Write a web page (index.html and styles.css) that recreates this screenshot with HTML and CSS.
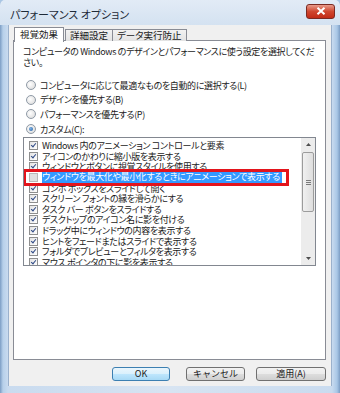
FILE: index.html
```html
<!DOCTYPE html>
<html lang="ja">
<head>
    <meta charset="UTF-8">
    <title>パフォーマンス オプション</title>
    <link rel="stylesheet" href="styles.css">
</head>
<body>
    <div class="window">
        <div class="titlebar">
            <span class="title">パフォーマンス オプション</span>
            <span class="close">
                <svg width="10" height="8" viewBox="0 0 10 8"><path d="M1.5 0.8 L8.5 7.2 M8.5 0.8 L1.5 7.2" stroke="#fff" stroke-width="2"/></svg>
            </span>
        </div>
        <div class="client">
            <div class="tabs">
                <div class="tab active">視覚効果</div>
                <div class="tab">詳細設定</div>
                <div class="tab">データ実行防止</div>
            </div>
            <div class="panel">
                <p class="intro">コンピュータの Windows のデザインとパフォーマンスに使う設定を選択してください。</p>
                <div class="radios">
                    <label class="radio"><span class="dot"></span>コンピュータに応じて最適なものを自動的に選択する(L)</label>
                    <label class="radio"><span class="dot"></span>デザインを優先する(B)</label>
                    <label class="radio"><span class="dot"></span>パフォーマンスを優先する(P)</label>
                    <label class="radio on"><span class="dot"></span>カスタム(C):</label>
                </div>
                <div class="listbox">
                    <div class="items">
                        <div class="item"><span class="check"></span>Windows 内のアニメーション コントロールと要素</div>
                        <div class="item"><span class="check"></span>アイコンのかわりに縮小版を表示する</div>
                        <div class="item"><span class="check"></span>ウィンドウとボタンに視覚スタイルを使用する</div>
                        <div class="item focus"><span class="check off"></span><span class="sel">ウィンドウを最大化や最小化するときにアニメーションで表示する</span></div>
                        <div class="item"><span class="check"></span>コンボ ボックスをスライドして開く</div>
                        <div class="item"><span class="check"></span>スクリーン フォントの縁を滑らかにする</div>
                        <div class="item"><span class="check"></span>タスク バー ボタンをスライドする</div>
                        <div class="item"><span class="check"></span>デスクトップのアイコン名に影を付ける</div>
                        <div class="item"><span class="check"></span>ドラッグ中にウィンドウの内容を表示する</div>
                        <div class="item"><span class="check"></span>ヒントをフェードまたはスライドで表示する</div>
                        <div class="item"><span class="check"></span>フォルダでプレビューとフィルタを表示する</div>
                        <div class="item"><span class="check"></span>マウス ポインタの下に影を表示する</div>
                    </div>
                    <div class="scrollbar">
                        <div class="arrow">
                            <svg width="5" height="3" viewBox="0 0 5 3"><path d="M0 3 L2.5 0 L5 3 Z" fill="#4d4d4d"/></svg>
                        </div>
                        <div class="track">
                            <div class="thumb"><span class="grip"></span></div>
                        </div>
                        <div class="arrow">
                            <svg width="5" height="3" viewBox="0 0 5 3"><path d="M0 0 L2.5 3 L5 0 Z" fill="#4d4d4d"/></svg>
                        </div>
                    </div>
                </div>
            </div>
            <div class="buttons">
                <button class="btn ok">OK</button>
                <button class="btn cancel">キャンセル</button>
                <button class="btn apply">適用(A)</button>
            </div>
        </div>
    </div>
</body>
</html>
```

FILE: styles.css
```css
body {
    margin: 0;
    font-family: "Noto Sans CJK JP", "Noto Sans", sans-serif;
    font-feature-settings: "palt";
    color: #1a1a1a;
    background-color: #a9c6e4;
}
.window {
    width: 340px;
    height: 393px;
    box-sizing: border-box;
    padding: 0 8px 7px 8px;
    background: linear-gradient(to right, #7c9dc4 0, #b7d0ea 3px, #c9dbef 8px, #d7e4f2 50%, #c9dbef 332px, #a9c7e6 337px, #7c9dc4 340px);
    border-radius: 5px 5px 0 0;
}
.titlebar {
    height: 25px;
    display: flex;
    align-items: center;
    justify-content: space-between;
    background: linear-gradient(to bottom, #e2ebf6, #d4e2f1);
    margin: 0 -8px;
    padding: 0 5px 0 10px;
    border-radius: 5px 5px 0 0;
}
.title {
    font-size: 11px;
    color: #1e2a38;
    margin-top: 2px;
}
.close {
    width: 27px;
    height: 13px;
    margin-top: -3px;
    display: flex;
    align-items: center;
    justify-content: center;
    background: linear-gradient(to bottom, #e89c8c, #d0472f 50%, #c22b16);
    border: 1px solid #7b2a22;
    border-radius: 3px;
}
.client {
    height: 361px;
    box-sizing: border-box;
    background-color: #f0f0f0;
    padding: 2px 5px 0 4px;
    border-left: 1px solid #9bb1cc;
    border-right: 1px solid #9bb1cc;
}
.tabs {
    display: flex;
    height: 13px;
    padding-left: 1px;
    position: relative;
    z-index: 1;
}
.tab {
    font-size: 9.5px;
    line-height: 11px;
    padding: 0 4px;
    margin-top: 2px;
    height: 11px;
    border: 1px solid #898c95;
    border-bottom: none;
    background: linear-gradient(to bottom, #f2f2f2, #e3e3e3);
    margin-right: -1px;
}
.tab.active {
    margin-top: 0;
    height: 14px;
    line-height: 13px;
    padding: 0 5px;
    background-color: #fff;
    background-image: none;
    margin-right: 1px;
}
.panel {
    height: 320px;
    box-sizing: border-box;
    background-color: #fff;
    border: 1px solid #898c95;
    padding: 5px 9px 0 9px;
    font-size: 9px;
    letter-spacing: -0.35px;
}
.intro {
    margin: 0 -3px 0 0;
    line-height: 11px;
}
.radios {
    margin-top: 10px;
    display: flex;
    flex-direction: column;
}
.radio {
    display: flex;
    align-items: center;
    height: 14.6px;
}
.dot {
    width: 8px;
    height: 8px;
    border: 1px solid #8f9aa6;
    border-radius: 50%;
    background: radial-gradient(circle at 40% 40%, #ffffff, #d6d6d6);
    margin: 0 4px 0 3px;
    position: relative;
}
.radio.on .dot::after {
    content: "";
    position: absolute;
    left: 2px;
    top: 2px;
    width: 4px;
    height: 4px;
    border-radius: 50%;
    background: radial-gradient(circle at 40% 40%, #7fb3e8, #1d5a9c);
}
.listbox {
    margin-top: 1px;
    height: 129px;
    box-sizing: border-box;
    border: 1px solid #828790;
    display: flex;
}
.items {
    flex: 1;
    padding-top: 2px;
    overflow: hidden;
}
.item {
    display: flex;
    align-items: center;
    height: 10.6px;
    white-space: nowrap;
    padding-left: 5px;
}
.check {
    width: 7px;
    height: 7px;
    flex: none;
    border: 1px solid #8e8f8f;
    background: linear-gradient(135deg, #e3e3e3, #ffffff);
    margin-right: 4px;
    position: relative;
}
.check::after {
    content: "";
    position: absolute;
    left: 2px;
    top: 0;
    width: 2px;
    height: 4px;
    border: solid #2f4a86;
    border-width: 0 1.5px 1.5px 0;
    transform: rotate(40deg);
}
.check.off {
    background: #e0e0e0;
    border-color: #b8b8b8;
}
.check.off::after {
    display: none;
}
.item.focus {
    position: relative;
    z-index: 1;
    width: fit-content;
    margin: -3px 0 -3px -1px;
    border: 3px solid #e3141c;
    padding: 0 4px 0 3px;
    background-color: #fff;
}
.sel {
    background-color: #3399ff;
    color: #fff;
    line-height: 10.6px;
    padding-right: 2px;
}
.scrollbar {
    width: 14px;
    display: flex;
    flex-direction: column;
    background-color: #ececec;
}
.arrow {
    height: 13px;
    display: flex;
    align-items: center;
    justify-content: center;
}
.track {
    flex: 1;
    padding: 1px;
}
.thumb {
    height: 58px;
    border: 1px solid #9c9c9c;
    border-radius: 2px;
    background: linear-gradient(to right, #f1f1f1, #dedede);
    display: flex;
    align-items: center;
    justify-content: center;
}
.grip {
    width: 5px;
    height: 5px;
    background: repeating-linear-gradient(to bottom, #7a7a7a 0, #7a7a7a 1px, transparent 1px, transparent 2px);
}
.buttons {
    display: flex;
    justify-content: flex-end;
    margin-top: 7px;
    gap: 11px;
}
.btn {
    height: 14px;
    font-family: inherit;
    font-size: 9px;
    line-height: 12px;
    padding: 0;
    color: #1a1a1a;
    border: 1px solid #707070;
    border-radius: 3px;
    background: linear-gradient(to bottom, #f2f2f2 0, #ebebeb 50%, #dddddd 51%, #cfcfcf 100%);
}
.ok {
    width: 58px;
    margin-right: 5px;
    border-color: #3c7fb1;
    background: linear-gradient(to bottom, #eaf6fd 0, #d9f0fc 50%, #bee6fd 51%, #a7d9f5 100%);
}
.cancel {
    width: 59px;
}
.apply {
    width: 70px;
}
```
